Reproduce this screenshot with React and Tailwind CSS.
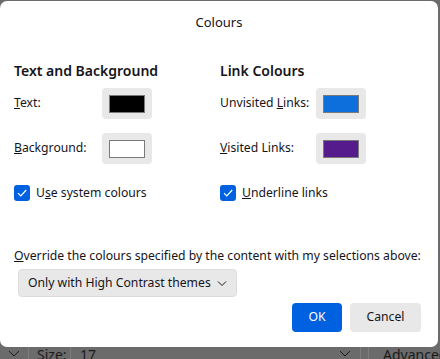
import React from 'react';

const font = { fontFamily: '"Noto Sans", "Open Sans", sans-serif' };

const Swatch = ({ color }) => (
  <button className="flex h-[31px] w-[50px] items-center justify-center rounded-[4px] bg-[#e8e8e8]">
    <span className="h-[18px] w-[36px] border border-[#7a7a7a]" style={{ backgroundColor: color }} />
  </button>
);

const Check = ({ children }) => (
  <label className="flex h-[16px] items-center gap-[6px] leading-[16px]">
    <span className="flex h-[16px] w-[16px] items-center justify-center rounded-[3px] bg-[#0061e0]">
      <svg width="12" height="12" viewBox="0 0 12 12" fill="none">
        <path d="M2 6.2 4.8 9 10.2 3" stroke="white" strokeWidth="1.2" />
      </svg>
    </span>
    <span className="whitespace-nowrap">{children}</span>
  </label>
);

const Row = ({ label, color, w }) => (
  <div className="flex h-[31px] items-center">
    <span className={w}>{label}</span>
    <Swatch color={color} />
  </div>
);

export default function App() {
  return (
    <div className="h-[359px] w-[440px] overflow-hidden bg-[#6b6b6b] text-[#15141a]" style={font}>
      <div className="relative z-10 mt-[1px] flex h-[346px] w-[438px] flex-col rounded-[7px] bg-white text-[12.2px]">
        <div className="pt-[12px] text-center text-[13px] leading-[18px]">Colours</div>

        <div className="mt-[33px] grid grid-cols-[206px_1fr] pl-[14px]">
          <div className="flex flex-col">
            <h2 className="text-[14px] font-semibold leading-[14px]">Text and Background</h2>
            <div className="mt-[10px] flex flex-col gap-[14px]">
              <Row w="w-[88px]" label={<><u>T</u>ext:</>} color="#000000" />
              <Row w="w-[88px]" label={<><u>B</u>ackground:</>} color="#ffffff" />
            </div>
            <div className="mt-[21px]">
              <Check>U<u>s</u>e system colours</Check>
            </div>
          </div>
          <div className="flex flex-col">
            <h2 className="text-[14px] font-semibold leading-[14px]">Link Colours</h2>
            <div className="mt-[10px] flex flex-col gap-[14px]">
              <Row w="w-[96px]" label={<>Unvisited <u>L</u>inks:</>} color="#0c6fdc" />
              <Row w="w-[96px]" label={<><u>V</u>isited Links:</>} color="#551a8b" />
            </div>
            <div className="mt-[21px]">
              <Check><u>U</u>nderline links</Check>
            </div>
          </div>
        </div>

        <div className="mt-[46px] whitespace-nowrap pl-[14px] leading-[18px]">
          <u>O</u>verride the colours specified by the content with my selections above:
        </div>
        <div className="mt-[4px] pl-[18px]">
          <button className="flex h-[28px] w-[219px] items-center justify-between rounded-[4px] border border-[#dcdcdc] bg-[#e8e8e8] pl-[9px] pr-[8px]">
            <span className="whitespace-nowrap">Only with High Contrast themes</span>
            <svg width="12" height="12" viewBox="0 0 12 12" fill="none">
              <path d="M2 4.5 6 8.5 10 4.5" stroke="#15141a" strokeWidth="1" />
            </svg>
          </button>
        </div>
        <div className="mt-[6px] flex justify-end gap-[8px] pr-[17px]">
          <button className="h-[29px] w-[50px] rounded-[4px] bg-[#0061e0] text-white">OK</button>
          <button className="h-[29px] w-[71px] rounded-[4px] bg-[#e8e8e8]">Cancel</button>
        </div>
      </div>

      <div className="-mt-[3px] flex h-[16px] items-start text-[14px] leading-[16px] text-[#1a1a1a]">
        <div className="flex w-[28px] justify-center pt-[4px]">
          <svg width="12" height="10" viewBox="0 0 12 10" fill="none">
            <path d="M1 3 6 8 11 3" stroke="#1a1a1a" strokeWidth="1" />
          </svg>
        </div>
        <div className="h-full w-px bg-[#7d7d7d]" />
        <div className="w-[41px] pl-[8px] pt-[3px]">Size:</div>
        <div className="h-full w-px bg-[#7d7d7d]" />
        <div className="flex-1 pl-[9px] pt-[3px]">17</div>
        <div className="flex w-[30px] justify-center pt-[4px]">
          <svg width="12" height="10" viewBox="0 0 12 10" fill="none">
            <path d="M1 3 6 8 11 3" stroke="#1a1a1a" strokeWidth="1" />
          </svg>
        </div>
        <div className="h-full w-px bg-[#7d7d7d]" />
        <div className="w-[7px]" />
        <div className="h-full w-px bg-[#7d7d7d]" />
        <div className="w-[71px] whitespace-nowrap pl-[14px] pt-[3px]">Advanced...</div>
      </div>
    </div>
  );
}
